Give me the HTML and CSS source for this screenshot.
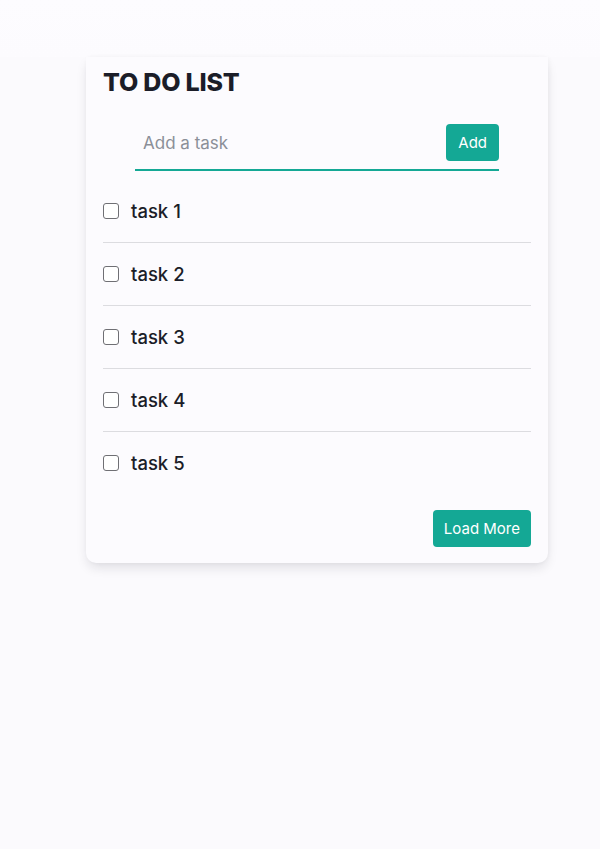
FILE: index.html
```html
<!DOCTYPE html>
<html lang="en">
<head>
<meta charset="utf-8">
<title>To Do List</title>
<link rel="stylesheet" href="styles.css">
</head>
<body>
<main class="page">
  <section class="card">
    <h1 class="title">TO DO LIST</h1>
    <form class="add-form">
      <input class="add-input" type="text" placeholder="Add a task">
      <button class="btn" type="button">Add</button>
    </form>
    <ul class="tasks">
      <li class="task"><span class="box"></span><span class="label">task 1</span></li>
      <li class="task"><span class="box"></span><span class="label">task 2</span></li>
      <li class="task"><span class="box"></span><span class="label">task 3</span></li>
      <li class="task"><span class="box"></span><span class="label">task 4</span></li>
      <li class="task"><span class="box"></span><span class="label">task 5</span></li>
    </ul>
    <div class="footer">
      <button class="btn btn-more" type="button">Load More</button>
    </div>
  </section>
</main>
</body>
</html>
```
FILE: styles.css
```css
* { box-sizing: border-box; }
html, body { margin: 0; padding: 0; }
body {
  background: #fbfafd;
  font-family: Inter, "Noto Sans", sans-serif;
  color: #1b1d28;
  width: 600px;
  height: 849px;
}
.page {
  padding: 57px 0 0 86px;
  background: linear-gradient(#fdfcff 0, #fcfbfe 57px, #fbfafd 57px);
  min-height: 849px;
}
.card {
  width: 462px;
  background: #fcfbfe;
  border-radius: 0 0 10px 10px;
  box-shadow: 0 6px 12px -2px rgba(20, 20, 40, 0.13), 1px 0 4px rgba(20, 20, 40, 0.03);
  padding: 9px 17px 16px;
}
.title {
  margin: 0;
  font-size: 25px;
  line-height: 32px;
  font-weight: 800;
  letter-spacing: -0.2px;
  color: #1b1d28;
}
.add-form {
  margin: 26px 32px 0;
  display: flex;
  align-items: center;
  border-bottom: 2px solid #14a895;
  padding-bottom: 8px;
}
.add-input {
  flex: 1;
  border: none;
  background: transparent;
  outline: none;
  font-family: inherit;
  font-size: 17px;
  padding: 0 8px;
  height: 37px;
  color: #1b1d28;
}
.add-input::placeholder { color: #8b8f98; }
.btn {
  background: #14a895;
  color: #ffffff;
  border: none;
  border-radius: 4px;
  font-family: inherit;
  font-size: 15px;
  height: 37px;
  padding: 0 12px;
}
.btn-more { padding: 0 11px; font-size: 15px; }
.tasks {
  list-style: none;
  margin: 9px 0 0;
  padding: 0;
}
.task {
  height: 63px;
  display: flex;
  align-items: center;
  gap: 12px;
  border-bottom: 1px solid #dcdce0;
}
.task:last-child { height: 62px; border-bottom: none; }
.box {
  width: 16px;
  height: 16px;
  border: 1.5px solid #6f6f74;
  border-radius: 3px;
  background: #fff;
}
.label {
  font-size: 18.5px;
  font-weight: 500;
  color: #1b1d28;
}
.footer {
  display: flex;
  justify-content: flex-end;
  margin-top: 16px;
}
```
